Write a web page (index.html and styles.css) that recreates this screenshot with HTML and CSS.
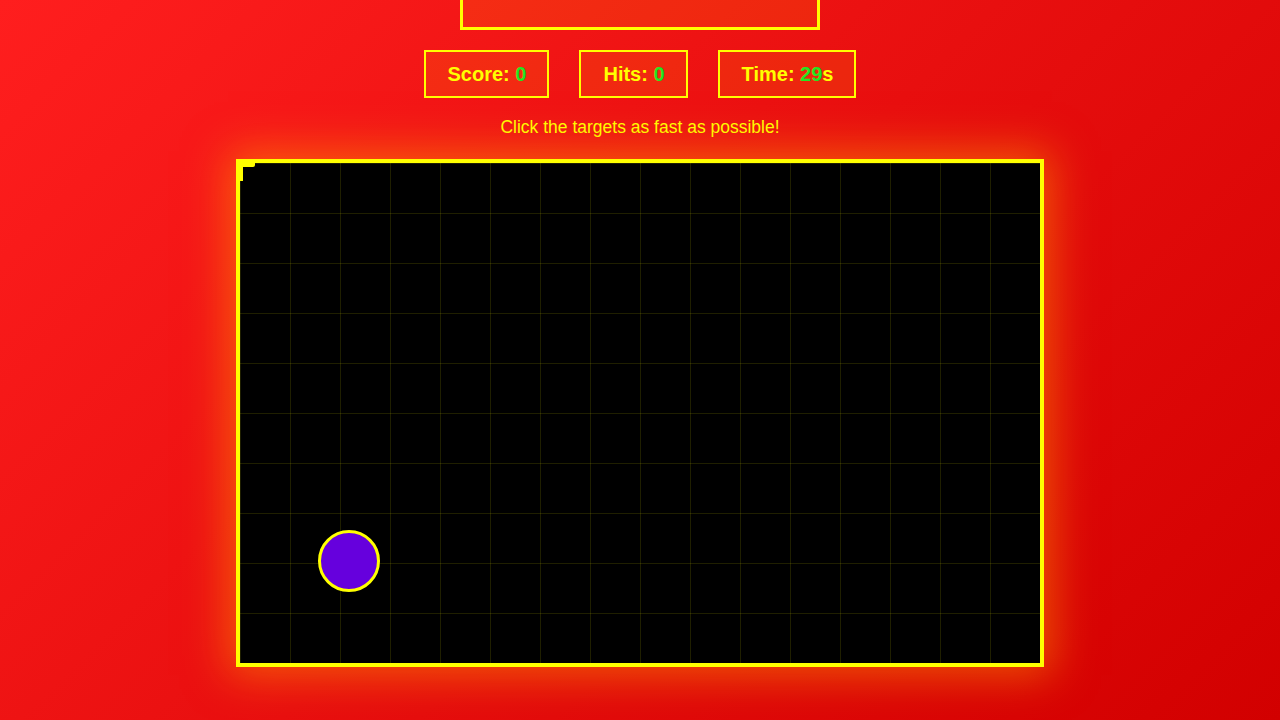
FILE: index.html
```html
<!DOCTYPE html>
<html>
<head>
<meta charset="utf-8">
<link rel="stylesheet" href="styles.css">
</head>
<body>
<div class="page">
  <div class="header-box"></div>
  <div class="stats">
    <div class="stat">Score: <span class="val">0</span></div>
    <div class="stat">Hits: <span class="val">0</span></div>
    <div class="stat">Time: <span class="val">29</span>s</div>
  </div>
  <p class="hint">Click the targets as fast as possible!</p>
  <div class="game">
    <div class="corner"></div>
    <div class="corner-side"></div>
    <div class="target"></div>
  </div>
</div>
</body>
</html>
```
FILE: styles.css
```css
html, body {
  margin: 0;
  padding: 0;
  height: 720px;
  overflow: hidden;
}
body {
  background: linear-gradient(135deg, #ff1e1e 0%, #e80f0f 50%, #d20000 100%);
  font-family: "Liberation Sans", Arial, sans-serif;
  color: #ffff00;
}
.page {
  display: flex;
  flex-direction: column;
  align-items: center;
}
.header-box {
  width: 354px;
  height: 54px;
  margin-top: -30px;
  border: 3px solid #ffff00;
  background: rgba(255, 200, 0, 0.12);
}
.stats {
  display: flex;
  gap: 30px;
  margin-top: 20px;
}
.stat {
  height: 44px;
  line-height: 44px;
  padding: 0 21px 0 22px;
  border: 2px solid #ffff00;
  background: rgba(255, 200, 0, 0.12);
  font-weight: bold;
  font-size: 20px;
}
.val {
  color: #22e622;
}
.hint {
  margin: 19px 0 0 0;
  font-size: 17.5px;
  line-height: 20px;
}
.game {
  position: relative;
  margin-top: 22px;
  width: 800px;
  height: 500px;
  border: 4px solid #ffff00;
  background-color: #000;
  background-image:
    linear-gradient(to right, rgba(255, 255, 0, 0.12) 1px, transparent 1px),
    linear-gradient(to bottom, rgba(255, 255, 0, 0.12) 1px, transparent 1px);
  background-size: 50px 50px;
  box-shadow: 0 0 40px 8px rgba(255, 160, 0, 0.5);
}
.corner {
  position: absolute;
  left: 0;
  top: 0;
  width: 15px;
  height: 4px;
  background: #ffff00;
  border-bottom-right-radius: 2px;
}
.corner-side {
  position: absolute;
  left: 0;
  top: 0;
  width: 3px;
  height: 18px;
  background: #ffff00;
}
.target {
  position: absolute;
  left: 78px;
  top: 367px;
  width: 56px;
  height: 56px;
  border: 3px solid #ffff00;
  border-radius: 50%;
  background: #6600dd;
}
```
